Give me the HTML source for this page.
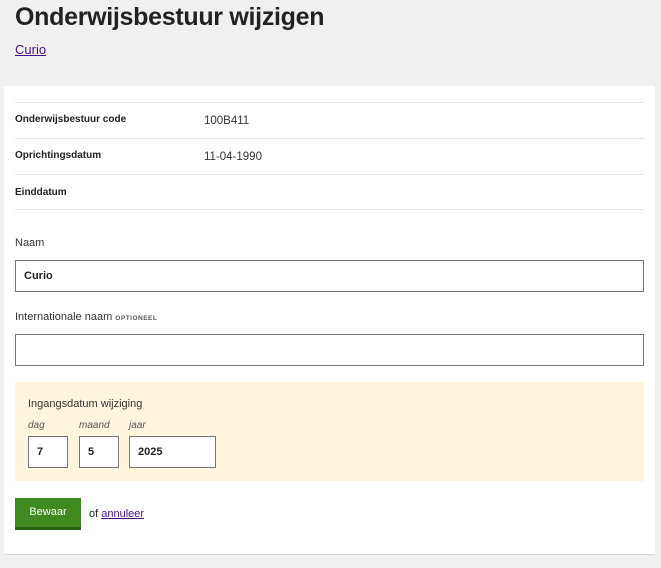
<!DOCTYPE html>
<html><head><meta charset="utf-8"><style>
body{margin:0;background:#f0f0f0;font-family:"Liberation Sans",sans-serif;color:#222;width:661px;height:568px;overflow:hidden;position:relative}
.a{position:absolute}
h1{position:absolute;left:15px;top:3px;margin:0;font-size:25px;font-weight:bold;color:#222;letter-spacing:-0.3px}
a{color:#4b0f8a}
.card{position:absolute;left:4px;top:86px;width:651px;height:468px;background:#fff;border-bottom:1px solid #d8d8d8}
.hr{position:absolute;left:15px;width:629px;height:1px;background:#e4e4e4}
.lbl{font-size:10px;font-weight:bold;color:#222}
.val{font-size:11.5px;color:#333}
.inp{position:absolute;border:1px solid #777;background:#fff;box-sizing:border-box;font-size:11px;font-weight:bold;padding-left:8px}
</style></head><body>
<h1>Onderwijsbestuur wijzigen</h1>
<a class="a" href="#" style="left:15px;top:42px;font-size:13px">Curio</a>
<div class="card"></div>
<div class="hr" style="top:102px"></div>
<div class="hr" style="top:138px"></div>
<div class="hr" style="top:174px"></div>
<div class="hr" style="top:209px"></div>
<div class="a lbl" style="left:15px;top:114px">Onderwijsbestuur code</div>
<div class="a val" style="left:204px;top:115px">100B411</div>
<div class="a lbl" style="left:15px;top:150px">Oprichtingsdatum</div>
<div class="a val" style="left:204px;top:151px">11-04-1990</div>
<div class="a lbl" style="left:15px;top:187px">Einddatum</div>
<div class="a val" style="left:15px;top:237px;font-size:11px">Naam</div>
<div class="inp" style="left:15px;top:260px;width:629px;height:32px;line-height:30px">Curio</div>
<div class="a val" style="left:15px;top:311px;font-size:11px">Internationale naam <span style="font-size:6.5px;font-weight:bold;letter-spacing:0.5px;color:#555">OPTIONEEL</span></div>
<div class="inp" style="left:15px;top:334px;width:629px;height:32px"></div>
<div class="a" style="left:15px;top:382px;width:629px;height:99px;background:#fff4dc"></div>
<div class="a val" style="left:28px;top:398px;font-size:11px">Ingangsdatum wijziging</div>
<div class="a" style="left:28px;top:420px;font-size:10px;font-style:italic;color:#555">dag</div>
<div class="a" style="left:79px;top:420px;font-size:10px;font-style:italic;color:#555">maand</div>
<div class="a" style="left:129px;top:420px;font-size:10px;font-style:italic;color:#555">jaar</div>
<div class="inp" style="left:28px;top:436px;width:40px;height:32px;line-height:30px">7</div>
<div class="inp" style="left:79px;top:436px;width:40px;height:32px;line-height:30px">5</div>
<div class="inp" style="left:129px;top:436px;width:87px;height:32px;line-height:30px">2025</div>
<div class="a" style="left:15px;top:498px;width:66px;height:29px;background:#3e8a1f;border-bottom:3px solid #2a6412;color:#fff;font-size:11px;text-align:center;line-height:29px">Bewaar</div>
<div class="a" style="left:89px;top:508px;font-size:11px">of <a href="#">annuleer</a></div>
</body></html>
